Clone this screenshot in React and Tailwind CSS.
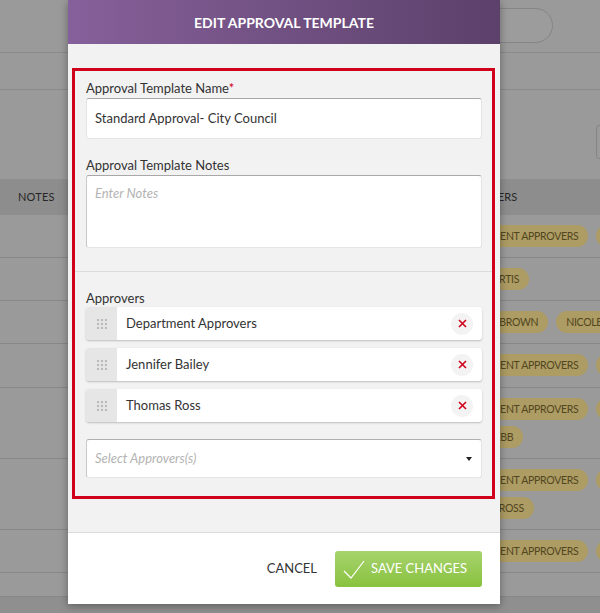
import React from "react";

const rows = [
  { h: "h-[43px]", lines: [["DEPARTMENT APPROVERS", "FINANCE TEAM"]] },
  { h: "h-[43px]", lines: [["KEVIN CURTIS"]] },
  { h: "h-[43px]", lines: [["MICHAEL BROWN", "NICOLE HALL"]] },
  { h: "h-[44px]", lines: [["DEPARTMENT APPROVERS", "LEGAL TEAM"]] },
  { h: "h-[71px]", lines: [["DEPARTMENT APPROVERS", "MARK SIMS"], ["ANNA WEBB"]] },
  { h: "h-[71px]", lines: [["DEPARTMENT APPROVERS", "JENNIFER BAILEY"], ["THOMAS ROSS"]] },
  { h: "h-[43px]", lines: [["DEPARTMENT APPROVERS", "CITY CLERK"]] },
];

const approvers = ["Department Approvers", "Jennifer Bailey", "Thomas Ross"];

const Pill = ({ children }) => (
  <span className="h-[22px] px-[10px] rounded-full bg-[#ad9c63] text-[#52461f] text-[10.5px] tracking-[-0.3px] leading-[22px] whitespace-nowrap">
    {children}
  </span>
);

const Grip = () => (
  <svg width="10" height="10" viewBox="0 0 10 10" fill="#b9b9b9">
    {[1, 5, 9].map((y) =>
      [1, 5, 9].map((x) => <circle key={`${x}-${y}`} cx={x} cy={y} r="1.2" />)
    )}
  </svg>
);

const Background = () => (
  <div className="w-[600px]">
    <div className="h-[53px] border-b border-[#8a8a8a] flex pt-[8px] pl-[353px]">
      <div className="w-[200px] h-[35px] rounded-full border border-[#858585] bg-[#9c9c9c]" />
    </div>
    <div className="h-[37px] border-b border-[#8a8a8a]" />
    <div className="h-[89px] pt-[35px] pl-[596px]">
      <div className="w-[40px] h-[34px] border border-[#858585] rounded-[3px]" />
    </div>
    <div className="h-[36px] bg-[#8d8d8d] flex items-center text-[11px] text-[#262626] tracking-[0.2px]">
      <div className="w-[453px] pl-[18px]">NOTES</div>
      <div>APPROVERS</div>
    </div>
    {rows.map((r, i) => (
      <div key={i} className={`${r.h} border-b border-[#878787] flex pt-[10px]`}>
        <div className="w-[443px] shrink-0" />
        <div className="flex flex-col gap-[6px]">
          {r.lines.map((line, j) => (
            <div key={j} className="flex gap-[8px]">
              {line.map((p) => (
                <Pill key={p}>{p}</Pill>
              ))}
            </div>
          ))}
        </div>
      </div>
    ))}
    <div className="h-[24px] border-b border-[#878787]" />
    <div className="h-[20px] bg-[#8f8f8f]" />
  </div>
);

const Modal = () => (
  <div className="absolute left-[68px] top-0 w-[432px] h-[604px] flex flex-col bg-[#f2f2f2] shadow-[0_2px_8px_rgba(0,0,0,0.35)]">
    <div className="h-[44px] shrink-0 flex items-center justify-center bg-gradient-to-r from-[#86609a] to-[#5c416b] text-white text-[14px] font-bold">
      EDIT APPROVAL TEMPLATE
    </div>
    <div className="pt-[24px] pl-[4px] pr-[5px] h-[488px] shrink-0">
      <div className="border-[3px] border-[#d0021b]">
        <div className="pt-[9px] pl-[11px] pr-[10px] pb-[23px]">
          <div className="text-[13px] leading-[16px] text-[#333] mb-[2px]">
            Approval Template Name<span className="text-[#d0021b]">*</span>
          </div>
          <div className="h-[41px] bg-white rounded-[3px] border border-[#e4e4e4] border-t-[#a8a8a8] flex items-center px-[8px] text-[13px] text-[#333]">
            Standard Approval- City Council
          </div>
          <div className="text-[13px] leading-[16px] text-[#333] mt-[18px] mb-[2px]">
            Approval Template Notes
          </div>
          <div className="h-[73px] bg-white rounded-[3px] border border-[#e4e4e4] border-t-[#a8a8a8] border-l-[#c8c8c8] px-[8px] pt-[8px] text-[13px] italic text-[#b3b3b3]">
            Enter Notes
          </div>
        </div>
        <div className="border-t border-[#dcdcdc]" />
        <div className="pt-[18px] pl-[11px] pr-[10px] pb-[18px]">
          <div className="text-[13px] leading-[16px] text-[#333] mb-[1px]">Approvers</div>
          <div className="flex flex-col gap-[8px]">
            {approvers.map((a) => (
              <div
                key={a}
                className="h-[33px] bg-white rounded-[3px] flex items-center shadow-[0_1px_2px_rgba(0,0,0,0.22)] overflow-hidden"
              >
                <div className="w-[31px] h-full bg-[#e6e6e6] flex items-center justify-center">
                  <Grip />
                </div>
                <div className="flex-1 pl-[9px] text-[13px] text-[#333]">{a}</div>
                <div className="w-[22px] h-[22px] rounded-full bg-[#f3f3f3] flex items-center justify-center mr-[9px]">
                  <svg width="9" height="9" viewBox="0 0 9 9" stroke="#d0021b" strokeWidth="1.6">
                    <path d="M1 1 L8 8 M8 1 L1 8" />
                  </svg>
                </div>
              </div>
            ))}
          </div>
          <div className="mt-[17px] h-[39px] bg-white rounded-[3px] border border-[#e4e4e4] border-t-[#b0b0b0] border-l-[#c8c8c8] flex items-center pl-[8px] pr-[9px]">
            <span className="flex-1 text-[13px] italic text-[#b3b3b3]">Select Approvers(s)</span>
            <span className="w-0 h-0 border-l-[3.5px] border-r-[3.5px] border-t-[4px] border-l-transparent border-r-transparent border-t-[#222]" />
          </div>
        </div>
      </div>
    </div>
    <div className="flex-1 bg-white border-t border-[#dcdcdc] flex items-center justify-end pr-[18px] gap-[18px]">
      <span className="text-[13px] text-[#333]">CANCEL</span>
      <div className="w-[147px] h-[36px] rounded-[3px] bg-gradient-to-b from-[#a6d36c] to-[#89c23d] flex items-center pl-[8px] text-white text-[13px]">
        <svg width="22" height="20" viewBox="0 0 22 20" fill="none" stroke="#fff" strokeWidth="1.2" className="mr-[6px]">
          <path d="M1 12 L8 19 L21 2" />
        </svg>
        SAVE CHANGES
      </div>
    </div>
  </div>
);

export default function App() {
  return (
    <div className="relative w-[600px] h-[613px] overflow-hidden bg-[#9a9a9a] font-['Lato',sans-serif]">
      <Background />
      <Modal />
    </div>
  );
}
